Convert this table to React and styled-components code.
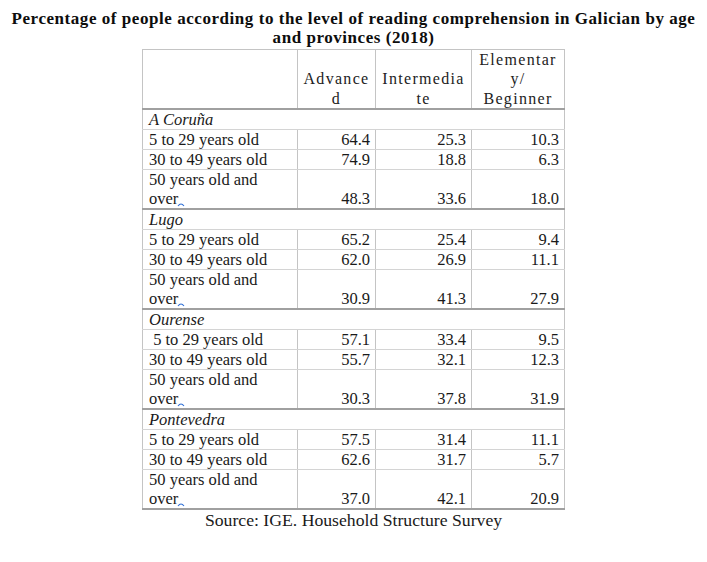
import styled, { createGlobalStyle } from "styled-components";

const GlobalStyle = createGlobalStyle`
    body {
        margin: 8px;
        background: #ffffff;
        color: #1a1a1a;
        font-family: "Liberation Serif", serif;
    }
`;

const provinces = [
    {
        name: "A Coruña",
        rows: [
            { age: "5 to 29 years old", v: ["64.4", "25.3", "10.3"] },
            { age: "30 to 49 years old", v: ["74.9", "18.8", "6.3"] },
        ],
        last: ["48.3", "33.6", "18.0"],
    },
    {
        name: "Lugo",
        rows: [
            { age: "5 to 29 years old", v: ["65.2", "25.4", "9.4"] },
            { age: "30 to 49 years old", v: ["62.0", "26.9", "11.1"] },
        ],
        last: ["30.9", "41.3", "27.9"],
    },
    {
        name: "Ourense",
        rows: [
            { age: "\u00a05 to 29 years old", v: ["57.1", "33.4", "9.5"] },
            { age: "30 to 49 years old", v: ["55.7", "32.1", "12.3"] },
        ],
        last: ["30.3", "37.8", "31.9"],
    },
    {
        name: "Pontevedra",
        rows: [
            { age: "5 to 29 years old", v: ["57.5", "31.4", "11.1"] },
            { age: "30 to 49 years old", v: ["62.6", "31.7", "5.7"] },
        ],
        last: ["37.0", "42.1", "20.9"],
    },
];

const Squiggle = () => (
    <Mark width="8" height="5" viewBox="0 0 8 5">
        <path d="M1 4 Q4 0 7 4" fill="none" stroke="#2f6fd6" strokeWidth="1.1" />
    </Mark>
);

const App = () => {
    return (
        <Page>
            <GlobalStyle />
            <Title>
                Percentage of people according to the level of reading comprehension in Galician by age
                <br />
                and provinces (2018)
            </Title>
            <Table>
                <colgroup>
                    <col style={{ width: 155 }} />
                    <col style={{ width: 78 }} />
                    <col style={{ width: 96 }} />
                    <col style={{ width: 93 }} />
                </colgroup>
                <thead>
                    <tr>
                        <HeadCell />
                        <HeadCell>
                            Advance
                            <br />d
                        </HeadCell>
                        <HeadCell>
                            Intermedia
                            <br />
                            te
                        </HeadCell>
                        <HeadCell>
                            Elementar
                            <br />
                            y/
                            <br />
                            Beginner
                        </HeadCell>
                    </tr>
                </thead>
                <tbody>
                    {provinces.map((p) => [
                        <tr key={p.name}>
                            <ProvinceCell colSpan={4}>{p.name}</ProvinceCell>
                        </tr>,
                        ...p.rows.map((r) => (
                            <tr key={p.name + r.age}>
                                <LabelCell>{r.age}</LabelCell>
                                {r.v.map((n, i) => (
                                    <NumCell key={i}>{n}</NumCell>
                                ))}
                            </tr>
                        )),
                        <tr key={p.name + "last"}>
                            <LabelCell $end>
                                50 years old and
                                <br />
                                over
                                <Squiggle />
                            </LabelCell>
                            {p.last.map((n, i) => (
                                <NumCell key={i} $end>
                                    {n}
                                </NumCell>
                            ))}
                        </tr>,
                    ])}
                </tbody>
            </Table>
            <Source>Source: IGE. Household Structure Survey</Source>
        </Page>
    );
};

export default App;

const Page = styled.div`
    width: 691px;
    display: flex;
    flex-direction: column;
    align-items: center;
`;
const Title = styled.div`
    font-family: "Liberation Serif", serif;
    font-weight: 700;
    font-size: 17px;
    letter-spacing: 0.55px;
    line-height: 19px;
    text-align: center;
    white-space: nowrap;
    color: #0d0d0d;
    margin-top: 1px;
    margin-bottom: 2px;
`;
const Table = styled.table`
    width: 422px;
    table-layout: fixed;
    border-collapse: collapse;
    border: 1px solid #c4c4c4;
    border-bottom: 2px solid #a0a0a0;
    font-family: "Liberation Serif", serif;
`;
const HeadCell = styled.th`
    height: 57px;
    padding: 0;
    font-family: "Liberation Serif", serif;
    font-weight: 400;
    font-size: 16px;
    letter-spacing: 1.3px;
    line-height: 19.3px;
    text-align: center;
    vertical-align: bottom;
    color: #222;
    border-left: 1px solid #c4c4c4;
    border-bottom: 2px solid #a0a0a0;
`;
const ProvinceCell = styled.td`
    height: 19px;
    padding: 0 6px;
    font-family: "Liberation Serif", serif;
    font-size: 16.5px;
    line-height: 19px;
    font-style: italic;
    color: #1a1a1a;
    border-bottom: 1px solid #d4d4d4;
`;
const LabelCell = styled.td`
    padding: 0 6px;
    font-family: "Liberation Serif", serif;
    font-size: 16.5px;
    line-height: 19px;
    vertical-align: bottom;
    white-space: pre;
    color: #1a1a1a;
    border-bottom: ${(p) => (p.$end ? "2px solid #a0a0a0" : "1px solid #d4d4d4")};
`;
const NumCell = styled.td`
    padding: 0 5px;
    font-family: "Liberation Serif", serif;
    font-size: 16.5px;
    line-height: 19px;
    text-align: right;
    vertical-align: bottom;
    color: #1a1a1a;
    border-left: 1px solid #c4c4c4;
    border-bottom: ${(p) => (p.$end ? "2px solid #a0a0a0" : "1px solid #d4d4d4")};
`;
const Mark = styled.svg`
    vertical-align: -3px;
    margin-left: -1px;
`;
const Source = styled.div`
    font-family: "Liberation Serif", serif;
    font-size: 17.7px;
    line-height: 20px;
    color: #1a1a1a;
`;
